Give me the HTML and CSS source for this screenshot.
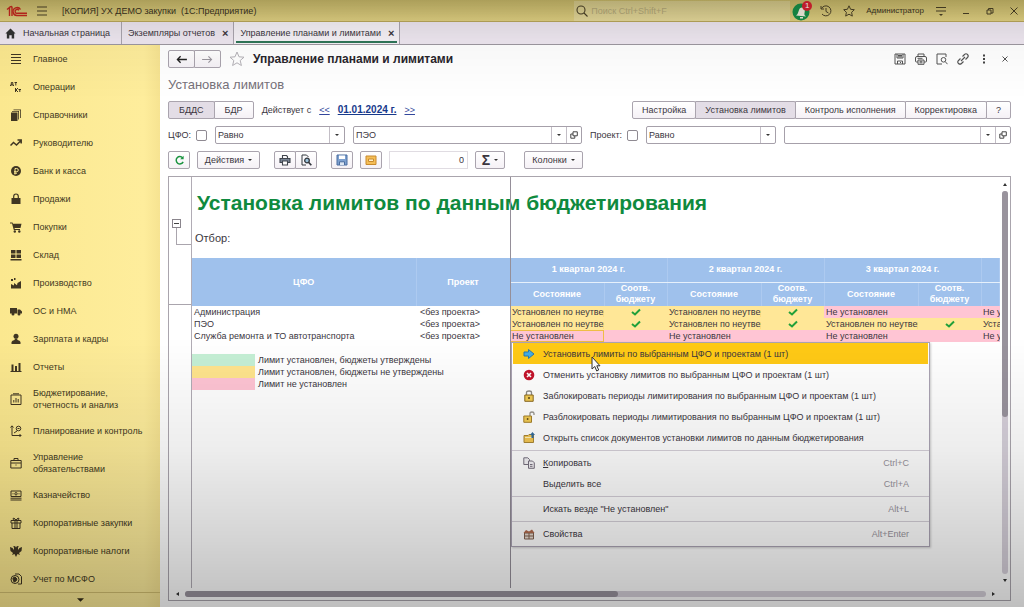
FILE: index.html
```html
<!DOCTYPE html>
<html lang="ru">
<head>
<meta charset="utf-8">
<meta name="viewport" content="width=device-width, initial-scale=1">
<title>[КОПИЯ] УХ ДЕМО закупки (1С:Предприятие)</title>
<link rel="stylesheet" href="styles.css">
</head>
<body>
<header class="titlebar">
  <svg class="logo" viewBox="0 0 22 12" width="22" height="12" fill="none" stroke="#c4281f" stroke-width="1.4"><path d="M1 4.500 3.500 2.500M3.500 2v9M6 1.500V11M3.500 2 6 1.300"/><path d="M14.500 4.500A4 4 0 1 0 11.500 10.500H21M12.800 5.300A2 2 0 1 0 11.500 8.300H21"/></svg>
  <button class="bare burger" aria-label="Меню"><svg viewBox="0 0 12 12" width="12" height="12" stroke="#4a4026" stroke-width="1.2"><path d="M1 2h10M1 6h10M1 10h10"/></svg></button>
  <span class="app-name">[КОПИЯ] УХ ДЕМО закупки&nbsp; (1С:Предприятие)</span>
  <label class="search">
    <svg viewBox="0 0 12 12" width="12" height="12" fill="none" stroke="#4a4026" stroke-width="1.1"><circle cx="5" cy="5" r="4"/><path d="m8 8 3.500 3.500"/></svg>
    <input type="text" placeholder="Поиск Ctrl+Shift+F" aria-label="Поиск">
  </label>
  <div class="title-tools">
    <button class="bare bell" aria-label="Уведомления"><svg viewBox="0 0 20 20" width="20" height="20"><circle cx="9" cy="11" r="8.500" fill="#189048"/><path d="M4 14.500c2-1 2-3 3-5.500s3-3 4.500-2 1.500 3 1 5 .5 2.500 1.500 3.500z" fill="#f5f1e0"/><path d="M8 16h3v1.500H8z" fill="#f5f1e0"/></svg><span class="badge">1</span></button>
    <button class="bare" aria-label="История"><svg viewBox="0 0 12 12" width="12" height="12" fill="none" stroke="#4a4026"><path d="M1.500 3.500A5 5 0 1 1 2 9M1 1v3h3M6 3v3.500l2.500 1.500"/></svg></button>
    <button class="bare" aria-label="Избранное"><svg viewBox="0 0 12 12" width="12" height="12" fill="none" stroke="#4a4026"><path d="m6 .8 1.600 3.500 3.700.4-2.700 2.600.7 3.800L6 9.200l-3.300 1.900.7-3.800L.7 4.700l3.700-.4z"/></svg></button>
    <span class="user">Администратор</span>
    <button class="bare" aria-label="Сервис"><svg viewBox="0 0 12 12" width="12" height="12" stroke="#4a4026" stroke-width="1.100"><path d="M1 2.500h10M1 6h10"/><path d="M4 9h4L6 11z" fill="#4a4026" stroke="none"/></svg></button>
    <div class="window-tools">
      <button class="bare" aria-label="Свернуть"><svg viewBox="0 0 8 8" width="8" height="8" stroke="#4a4026"><path d="M1 6.500h6"/></svg></button>
      <button class="bare" aria-label="Развернуть"><svg viewBox="0 0 8 8" width="8" height="8" fill="none" stroke="#4a4026"><path d="M1 3h4v4H1zM2.500 3V1.500H7V6H5"/></svg></button>
      <button class="bare" aria-label="Закрыть"><svg viewBox="0 0 8 8" width="8" height="8" stroke="#4a4026"><path d="m.5.5 7 7M7.500.5l-7 7"/></svg></button>
    </div>
  </div>
</header>

<nav class="tabs" aria-label="Открытые окна">
  <a class="tab home" href="#"><svg viewBox="0 0 12 12" width="11" height="11" fill="#333"><path d="M6 .5 11.500 6H10v5.500H7.300V8H4.700v3.500H2V6H.5z"/></svg>Начальная страница</a>
  <a class="tab" href="#">Экземпляры отчетов<span class="tab-x">×</span></a>
  <a class="tab current" href="#">Управление планами и лимитами<span class="tab-x">×</span></a>
</nav>

<div class="shell">
<aside class="sidebar">
  <nav class="sections" aria-label="Разделы">
    <a href="#"><svg viewBox="0 0 12 12" stroke="#403623" stroke-width="1.200"><path d="M1 1.500h10M1 4.500h10M1 7.500h10M1 10.500h10"/></svg>Главное</a>
    <a href="#"><svg viewBox="0 0 12 12" fill="none" stroke="#403623"><path d="M.5 5V4h3v1M1.300 4V1.500h1.500V4M4.500 1.500h2.500M5.800 1.500V4.500M5.500 7v4M8 7 6 9l2 2M8.500 8.500H11M9.800 8.500V11"/></svg>Операции</a>
    <a href="#"><svg viewBox="0 0 12 12" fill="#403623"><path d="M1 3.500h6.500V12H1zM2 2h7v8.500h-.8V2.800H2zM3.500.5h7.500V9h-.8V1.300H3.500z"/></svg>Справочники</a>
    <a href="#"><svg viewBox="0 0 12 12" fill="none" stroke="#403623" stroke-width="1.500"><path d="M.5 8.500 3.500 5.500l3 2.500L11 3.500M7.500 3H11.200V6.500"/></svg>Руководителю</a>
    <a href="#"><svg viewBox="0 0 12 12"><circle cx="6" cy="6" r="5" fill="#403623"/><path d="M5 9.500V3.500h1.700a1.500 1.500 0 0 1 0 3.200H4M4 8.200h3" fill="none" stroke="#fbe892"/></svg>Банк и касса</a>
    <a href="#"><svg viewBox="0 0 12 12"><path d="M1.500 5h9v6h-9z" fill="#403623"/><path d="M3.700 6V3.500a2.300 2.500 0 0 1 4.600 0V6" fill="none" stroke="#403623" stroke-width="1.200"/></svg>Продажи</a>
    <a href="#"><svg viewBox="0 0 12 12" fill="#403623"><path d="M0 1.500h2.500l.5 1.300h8.500L10.500 7H4.500l.3 1H10v1H3.800L2 2.500H0z"/><circle cx="4.800" cy="10.500" r="1.200"/><circle cx="9.300" cy="10.500" r="1.200"/></svg>Покупки</a>
    <a href="#"><svg viewBox="0 0 12 12" fill="#403623"><path d="M1 1h4.500v3.500H1zM6.500 1H11v3.500H6.500zM1 5.500h4.500V9H1zM6.500 5.500H11V9H6.500zM.5 10h11v1.500H.5z"/></svg>Склад</a>
    <a href="#"><svg viewBox="0 0 12 12" fill="#403623"><path d="M1 11.500V7l3 1.500V6l3 2.300L7.500 6l3.500-2v7.500zM1 2h2v2H1zM4 1h1.500v2H4z"/></svg>Производство</a>
    <a href="#"><svg viewBox="0 0 12 12" fill="#403623"><path d="M0 3h7v5.500H0zM7.500 4.500h2.500L12 6.500v2H7.500z"/><circle cx="3" cy="9" r="1.500"/><circle cx="9" cy="9" r="1.500"/></svg>ОС и НМА</a>
    <a href="#"><svg viewBox="0 0 12 12" fill="#403623"><circle cx="6" cy="3.300" r="2.500"/><path d="M1.500 11V9Q2 7.500 4.500 7L5 5.500h2L7.500 7Q10 7.500 10.500 9v2z"/></svg>Зарплата и кадры</a>
    <a href="#"><svg viewBox="0 0 12 12" fill="#403623"><path d="M1.500 3.500h2V10h-2zM5 5h2v5H5zM8.500 2h2v8h-2zM.5 10h11v1H.5z"/></svg>Отчеты</a>
    <a class="two" href="#"><svg viewBox="0 0 12 12" fill="none" stroke="#403623"><path d="M1 2h10v9.500H1zM3 .8h6M3.800 9.500V7M6 9.500V5M8.200 9.500V6" /></svg><span>Бюджетирование,<br>отчетность и анализ</span></a>
    <a href="#"><svg viewBox="0 0 12 12" fill="none" stroke="#403623"><path d="M2 1v9.500h9M.5 2.500 2 .8l1.500 1.700M9.500 9l1.500 1.500L9.500 12M4 8l3-2"/><circle cx="8.500" cy="3.500" r="2.300"/><path d="M7.500 3.500h2"/></svg>Планирование и контроль</a>
    <a class="two" href="#"><svg viewBox="0 0 12 12" fill="none" stroke="#403623"><path d="M.8 3.500h10.400v7.500H.8zM4 3.500V1.500h4v2M1 6h10M5.500 8h1"/></svg><span>Управление<br>обязательствами</span></a>
    <a href="#"><svg viewBox="0 0 12 12" fill="none" stroke="#403623"><path d="M1 2h10v5.500H1zM.5 9.200h11M.5 11h11"/><circle cx="6" cy="4.800" r="1.200"/><path d="M2.500 4.800h1M8.500 4.800h1"/></svg>Казначейство</a>
    <a href="#"><svg viewBox="0 0 12 12" fill="none" stroke="#403623"><path d="M1 3.500h10V6H1zM2 6v5.500h8V6M5 3.500v8M7 3.500v8M5.500 3.500Q2.500 3 3 1.500T6 3q2.500-3 3-1.500T6.500 3.500"/></svg>Корпоративные закупки</a>
    <a href="#"><svg viewBox="0 0 12 12" fill="#403623"><path d="M0 2l2.500 1L4 5V2.500L3 1.500 5 1l1 1.500L7 1l2 .5-1 1V5l1.500-2L12 2l-.5 4L9 8l1 2-2.500-1L6 12 4.500 9 2 10l1-2L.5 6z"/></svg>Корпоративные налоги</a>
    <a href="#"><svg viewBox="0 0 12 12" fill="none" stroke="#403623"><circle cx="5" cy="6.500" r="4"/><path d="M5 1h4l2.500 2.500V11H8" /><path d="M3 5l2-1 2 2-1 2-2 1zM1.500 6h1" fill="#403623"/></svg>Учет по МСФО</a>
  </nav>
  <button class="bare more" aria-label="Еще разделы"><svg viewBox="0 0 8 4" width="7" height="4" fill="#352c18"><path d="M0 0h8L4 4z"/></svg></button>
</aside>

<main class="form">
  <div class="row head">
    <div class="group">
      <button class="btn icon wide" aria-label="Назад"><svg viewBox="0 0 12 10" width="11" height="9" fill="none" stroke="#222" stroke-width="1.500"><path d="M12 5H2M5 1.500 1.500 5 5 8.500"/></svg></button>
      <button class="btn icon wide" aria-label="Вперед"><svg viewBox="0 0 12 10" width="11" height="9" fill="none" stroke="#9a959e" stroke-width="1.200"><path d="M0 5h10M7 1.500 10.500 5 7 8.500"/></svg></button>
    </div>
    <button class="bare" aria-label="В избранное"><svg viewBox="0 0 16 16" width="16" height="16" fill="none" stroke="#b5b2b8"><path d="m8 1 2 4.800 5 .4-3.800 3.300 1.200 5L8 11.800l-4.400 2.700 1.200-5L1 6.200l5-.4z"/></svg></button>
    <h1 class="form-title">Управление планами и лимитами</h1>
    <div class="head-tools">
      <button class="bare" aria-label="Сохранить"><svg viewBox="0 0 12 12" width="12" height="12" fill="none" stroke="#555"><path d="M1 1h10v10H1zM3 1v4h6V1M4 2.500h4M4 3.800h4M3.500 11V8h5v3M6.500 9v1"/></svg></button>
      <button class="bare" aria-label="Печать"><svg viewBox="0 0 12 12" width="12" height="12" fill="none" stroke="#555"><path d="M3 3.500V1h6v2.500M3 9H1.500Q.5 9 .5 8V5q0-1.500 1.500-1.500h8q1.500 0 1.500 1.500v3q0 1-1 1H9M3 7h6v4.300H3zM4.500 8.300h3M4.500 9.800h3M2.500 5.300h5"/></svg></button>
      <button class="bare" aria-label="Просмотр"><svg viewBox="0 0 12 12" width="12" height="12" fill="none" stroke="#555"><path d="M10 4V1H1v10h5"/><circle cx="7.500" cy="6.800" r="2.300"/><path d="m9.200 8.600 2.300 2.600"/></svg></button>
      <button class="bare" aria-label="Ссылка"><svg viewBox="0 0 12 12" width="12" height="12" fill="none" stroke="#555" stroke-width="1.100"><path d="m4 8 4-4M5.500 3.500 7.500 1.500a2.100 2.100 0 0 1 3 3L8.500 6.500M3.500 5.500 1.500 7.500a2.100 2.100 0 0 0 3 3L6.500 8.500"/></svg></button>
      <button class="bare" aria-label="Еще"><svg viewBox="0 0 12 12" width="12" height="12" fill="#444"><path d="M5 1.500h2v2H5zM5 5h2v2H5zM5 8.500h2v2H5z"/></svg></button>
      <button class="bare" aria-label="Закрыть форму"><svg viewBox="0 0 12 12" width="12" height="12" stroke="#555"><path d="m3.500 3.500 5 5M8.500 3.500l-5 5"/></svg></button>
    </div>
  </div>

  <h2 class="subtitle">Установка лимитов</h2>

  <div class="row">
    <div class="group kinds">
      <button class="btn on" aria-pressed="true">БДДС</button>
      <button class="btn">БДР</button>
    </div>
    <span>Действует с</span>
    <a class="link" href="#">&lt;&lt;</a>
    <a class="date" href="#">01.01.2024 г.</a>
    <a class="link" href="#">&gt;&gt;</a>
    <div class="group modes">
      <button class="btn">Настройка</button>
      <button class="btn on" aria-pressed="true">Установка лимитов</button>
      <button class="btn">Контроль исполнения</button>
      <button class="btn">Корректировка</button>
      <button class="btn">?</button>
    </div>
  </div>

  <div class="row">
    <div class="filter">
      <label class="check">ЦФО:<input type="checkbox"></label>
      <div class="field kind"><select aria-label="Вид сравнения ЦФО"><option>Равно</option></select><i class="drop"></i></div>
      <div class="field grow"><input type="text" value="ПЭО" aria-label="ЦФО"><button class="drop" aria-label="Выбрать ЦФО"></button><button class="open" aria-label="Открыть ЦФО"><svg viewBox="0 0 8 8" width="8" height="8" fill="none" stroke="#444"><path d="M3 .8h4.300v4H3zM3 3H.8v4.200h4V5"/></svg></button></div>
    </div>
    <div class="filter filter-wide">
      <label class="check">Проект:<input type="checkbox"></label>
      <div class="field kind"><select aria-label="Вид сравнения проекта"><option>Равно</option></select><i class="drop"></i></div>
      <div class="field grow"><input type="text" aria-label="Проект"><button class="drop" aria-label="Выбрать проект"></button><button class="open" aria-label="Открыть проект"><svg viewBox="0 0 8 8" width="8" height="8" fill="none" stroke="#444"><path d="M3 .8h4.300v4H3zM3 3H.8v4.200h4V5"/></svg></button></div>
    </div>
  </div>

  <div class="row commands">
    <button class="btn icon" aria-label="Обновить"><svg viewBox="0 0 12 12" width="11" height="11" fill="none" stroke="#1b9440" stroke-width="1.600"><path d="M9.500 3.200A4 4 0 1 0 10 7.500"/><path d="M10.500.8V4.500H6.800z" fill="#1b9440" stroke="none"/></svg></button>
    <button class="btn menu-btn">Действия<i class="tri"></i></button>
    <div class="group gap-before">
      <button class="btn icon" aria-label="Печать таблицы"><svg viewBox="0 0 12 12" width="12" height="12" fill="none" stroke="#41464e" stroke-width="1.100"><path d="M3.500 4V1.500h4l1 1V4"/><path d="M1 4.500h10v4H1z" fill="#788494"/><path d="M3.500 7h5v4h-5z" fill="#fff"/></svg></button>
      <button class="btn icon" aria-label="Предварительный просмотр"><svg viewBox="0 0 12 12" width="12" height="12" fill="none" stroke="#33383e"><path d="M6 11H2V1h4.500l2 2"/><circle cx="7" cy="6.500" r="2.300" fill="#9cc4dd" stroke-width="1.300"/><path d="m8.800 8.500 2.500 2.800" stroke-width="1.700"/></svg></button>
    </div>
    <button class="btn icon gap-before" aria-label="Сохранить таблицу"><svg viewBox="0 0 12 12" width="12" height="12" stroke="#4b6d9f"><path d="M1 1h10v10H1z" fill="#7da0cf"/><path d="M3 1.500h6V5H3z" fill="#fff" stroke="none"/><path d="M3.500 11V7.800h5V11" fill="#dce6f3"/></svg></button>
    <button class="btn icon" aria-label="Редактировать ячейку"><svg viewBox="0 0 12 12" width="12" height="12"><path d="M1 2h10v8.500H1z" fill="#f5be57" stroke="#c88a2e"/><path d="M3.500 5h5v2.500h-5z" fill="#fff0c8" stroke="#c88a2e"/></svg></button>
    <input class="sum" type="text" value="0" aria-label="Сумма выделенных ячеек">
    <button class="btn sigma" aria-label="Сумма"><b>Σ</b><i class="tri"></i></button>
    <button class="btn columns">Колонки<i class="tri"></i></button>
  </div>

  <section class="sheet" aria-label="Установка лимитов по данным бюджетирования">
    <div class="gutter">
      <button class="fold" aria-label="Свернуть группу"></button>
      <i class="bracket"></i>
      <i class="split-row"></i>
    </div>
    <div class="canvas">
      <h3 class="report-title">Установка лимитов по данным бюджетирования</h3>
      <p class="selection">Отбор:</p>
      <table class="limits">
        <colgroup><col class="c-cfo"><col class="c-project"><col class="c-state"><col class="c-match"><col class="c-state"><col class="c-match"><col class="c-state"><col class="c-match"><col></colgroup>
        <thead>
          <tr><th rowspan="2">ЦФО</th><th rowspan="2">Проект</th><th class="q" colspan="2">1 квартал 2024 г.</th><th class="q" colspan="2">2 квартал 2024 г.</th><th class="q" colspan="2">3 квартал 2024 г.</th><th class="q"></th></tr>
          <tr><th>Состояние</th><th>Соотв. бюджету</th><th>Состояние</th><th>Соотв. бюджету</th><th>Состояние</th><th>Соотв. бюджету</th><th></th></tr>
        </thead>
        <tbody>
          <tr><td>Администрация</td><td class="project">&lt;без проекта&gt;</td><td class="wait">Установлен по неутвержденным</td><td class="wait tick"><svg viewBox="0 0 10 8"><path d="m1 4 3 2.500L9 1.500"/></svg></td><td class="wait">Установлен по неутвержденным</td><td class="wait tick"><svg viewBox="0 0 10 8"><path d="m1 4 3 2.500L9 1.500"/></svg></td><td class="none">Не установлен</td><td class="none"></td><td class="none">Не установлен</td></tr>
          <tr><td>ПЭО</td><td class="project">&lt;без проекта&gt;</td><td class="wait">Установлен по неутвержденным</td><td class="wait tick"><svg viewBox="0 0 10 8"><path d="m1 4 3 2.500L9 1.500"/></svg></td><td class="wait">Установлен по неутвержденным</td><td class="wait tick"><svg viewBox="0 0 10 8"><path d="m1 4 3 2.500L9 1.500"/></svg></td><td class="wait">Установлен по неутвержденным</td><td class="wait tick"><svg viewBox="0 0 10 8"><path d="m1 4 3 2.500L9 1.500"/></svg></td><td class="wait">Установлен</td></tr>
          <tr><td>Служба ремонта и ТО автотранспорта</td><td class="project">&lt;без проекта&gt;</td><td class="none picked">Не установлен</td><td class="none"></td><td class="none">Не установлен</td><td class="none"></td><td class="none">Не установлен</td><td class="none"></td><td class="none">Не установлен</td></tr>
        </tbody>
      </table>
      <ul class="legend">
        <li class="ok">Лимит установлен, бюджеты утверждены</li>
        <li class="pending">Лимит установлен, бюджеты не утверждены</li>
        <li class="missing">Лимит не установлен</li>
      </ul>
      <i class="split-col"></i>
    </div>
    <div class="vscroll"><svg viewBox="0 0 4 3"><path d="M0 3h4L2 0z"/></svg><div class="track"><div class="thumb"></div></div><svg viewBox="0 0 4 3"><path d="M0 0h4L2 3z"/></svg></div>
    <div class="hscroll"><svg viewBox="0 0 3 4"><path d="M3 0v4L0 2z"/></svg><div class="track"><div class="thumb"></div></div><svg viewBox="0 0 3 4"><path d="M0 0v4l3-2z"/></svg></div>

    <div class="popup" role="menu">
      <div class="popup-group actions">
        <button class="hot" role="menuitem"><svg viewBox="0 0 12 12"><path d="M1 4h4.500V1.500L11 6l-5.500 4.500V8H1z" fill="#45aee6" stroke="#2b78a8"/></svg>Установить лимиты по выбранным ЦФО и проектам (1 шт)</button>
        <button role="menuitem"><svg viewBox="0 0 12 12"><circle cx="6" cy="6" r="5.300" fill="#c4152c"/><path d="m4 4 4 4M8 4 4 8" stroke="#fff" stroke-width="1.600"/></svg>Отменить установку лимитов по выбранным ЦФО и проектам (1 шт)</button>
        <button role="menuitem"><svg viewBox="0 0 12 12"><path d="M3.500 5.500V2.500q0-1.500 2.500-1.500t2.500 1.500v3" fill="none" stroke="#8d8b86" stroke-width="1.300"/><path d="M1.800 5h8.400v6.300H1.800z" fill="#f3cc55" stroke="#8b6b22"/><path d="M6 7v2" stroke="#584516" stroke-width="1.500"/></svg>Заблокировать периоды лимитирования по выбранным ЦФО и проектам (1 шт)</button>
        <button role="menuitem"><svg viewBox="0 0 12 12"><path d="M7 5.500V2.500Q7 1 9 1t2 1.500V4" fill="none" stroke="#99968f" stroke-width="1.300"/><path d="M.8 5h7.700v6.300H.8z" fill="#f3cc55" stroke="#a5812c"/><path d="M4.600 7v2" stroke="#70591e" stroke-width="1.500"/></svg>Разблокировать периоды лимитирования по выбранным ЦФО и проектам (1 шт)</button>
        <button role="menuitem"><svg viewBox="0 0 12 12"><path d="M1 3.500h4l1-1h4.500V10.500H1z" fill="#f3c653" stroke="#a98636"/><path d="M2 5.500h8" stroke="#fff2bd"/><path d="M9.500 0 12 3h-1.500v3h-2V3H7z" fill="#356d9d"/></svg>Открыть список документов установки лимитов по данным бюджетирования</button>
      </div>
      <div class="popup-group">
        <button role="menuitem"><svg viewBox="0 0 12 12" fill="#f4f2f6" stroke="#77717f"><path d="M.8.8h4l1.700 1.700v5H.8z"/><path d="M5.500 4h4l1.800 1.800v5.500H5.500zM7 7.500h2.500M7 9.300h2.500"/></svg><span><u>К</u>опировать</span><kbd>Ctrl+C</kbd></button>
        <button role="menuitem"><svg viewBox="0 0 12 12"></svg><span>Вы<u>д</u>елить все</span><kbd>Ctrl+A</kbd></button>
      </div>
      <div class="popup-group">
        <button role="menuitem"><svg viewBox="0 0 12 12"></svg>Искать везде "Не установлен"<kbd>Alt+L</kbd></button>
      </div>
      <div class="popup-group">
        <button role="menuitem"><svg viewBox="0 0 12 12"><path d="M1.500 5h9v6h-9z" fill="#e9ddd2" stroke="#80614f"/><path d="M.5 5 3 2l3 1.500L9 1.500 11.500 5z" fill="#b06a4d"/><path d="M6 5v6M2 8h8" stroke="#80614f"/></svg>Свойства<kbd>Alt+Enter</kbd></button>
      </div>
      <svg class="pointer" viewBox="0 0 10 16" width="10" height="16"><path d="M1 1v12l2.800-2.500L5.700 15l2-1-1.900-4.200H9z" fill="#fff" stroke="#333"/></svg>
    </div>
  </section>
</main>
</div>
<div class="shade"></div>
</body>
</html>
```
FILE: styles.css
```css
* { box-sizing: border-box; }

body {
  margin: 0;
  height: 100vh;
  display: flex;
  flex-direction: column;
  overflow: hidden;
  background: #fff;
  color: #3b363e;
  font: 9px/12px "Liberation Sans", Arial, sans-serif;
}

button, input, select { font: inherit; color: inherit; margin: 0; }
a { color: inherit; text-decoration: none; }
svg { display: block; flex: none; }
i { display: block; }
.bare { padding: 0; border: 0; background: none; display: block; }

/* Window title */
.titlebar {
  flex: none;
  height: 22px;
  display: flex;
  align-items: center;
  padding: 0 6px;
  background: linear-gradient(#c6b768, #e2d283);
  border-bottom: 1px solid #bba95c;
  color: #3a3220;
}
.burger { margin: 0 14px 0 8px; }
.app-name { flex: 1; white-space: nowrap; }
.search {
  display: flex;
  align-items: center;
  gap: 3px;
  width: 216px;
  height: 20px;
  padding-left: 2px;
  background: rgba(255, 255, 255, .2);
}
.search input { flex: 1; min-width: 0; border: 0; padding: 0; background: none; }
.search input::placeholder { color: #b3a778; opacity: 1; }
.title-tools { display: flex; align-items: center; gap: 11px; padding-left: 2px; }
.user { font-size: 8px; }
.bell { position: relative; margin-right: -3px; }
.badge {
  position: absolute;
  top: 0;
  right: 0;
  width: 10px;
  height: 10px;
  border-radius: 50%;
  background: #da2432;
  color: #fff;
  font-size: 8px;
  line-height: 10px;
}
.window-tools { display: flex; gap: 16px; padding-left: 4px; }

/* Open windows */
.tabs {
  flex: none;
  height: 23px;
  display: flex;
  background: #eee7f0;
  border-bottom: 1px solid #9d98a0;
}
.tab {
  position: relative;
  display: flex;
  align-items: center;
  gap: 7px;
  padding: 0 5px 0 6px;
  border-right: 1px solid #aaa5ae;
  white-space: nowrap;
}
.home { padding: 0 11px 0 5px; }
.tab-x { font-size: 11px; font-weight: bold; line-height: 10px; }
.current { background: #f6f2f7; }
.current::after {
  content: "";
  position: absolute;
  inset: auto 2px 1px;
  height: 2px;
  background: #2f7658;
}

.shell { flex: 1; min-height: 0; display: flex; }

/* Sections */
.sidebar {
  flex: none;
  width: 160px;
  display: flex;
  flex-direction: column;
  background: linear-gradient(90deg, #fbe88f, #feed9c 90%, #f6e391);
  color: #43391f;
}
.sections { flex: 1; min-height: 0; overflow: hidden; border-bottom: 1px solid #d3c070; }
.sections a { height: 28px; display: flex; gap: 11px; align-items: center; padding-left: 10px; white-space: nowrap; }
.sections .two { height: 36px; }
.sections svg { width: 12px; height: 12px; }
.more { flex: none; height: 14px; align-self: center; }

/* Form */
.form { flex: 1; min-width: 0; display: flex; flex-direction: column; gap: 7px; padding: 5px 13px 6px 8px; }
.row { display: flex; align-items: center; gap: 8px; height: 18px; flex: none; white-space: nowrap; }
.form-title { margin: 0; font-size: 12px; line-height: 18px; color: #29252c; }
.head-tools { display: flex; gap: 9px; margin-left: auto; }
.subtitle { margin: 0; font-size: 13px; font-weight: normal; line-height: 19px; color: #77727a; }

.btn {
  height: 18px;
  display: flex;
  align-items: center;
  justify-content: center;
  gap: 4px;
  padding: 0 9px;
  border: 1px solid #aaa4ae;
  border-radius: 2px;
  background: linear-gradient(#fff, #f5f1f6);
  white-space: nowrap;
}
.btn.icon { width: 22px; padding: 0; }
.btn.wide { width: 27px; }
.btn.on { background: #e3dde6; }
.group { display: flex; }
.group .btn + .btn { margin-left: -1px; border-radius: 0 2px 2px 0; }
.kinds .btn { padding: 0 10px; }
.modes { margin-left: auto; }
.link { color: #33479c; text-decoration: underline; }
.date { color: #183a8c; font-size: 10px; font-weight: bold; text-decoration: underline; }

.filter { flex: 58; min-width: 0; display: flex; align-items: center; gap: 8px; }
.filter-wide { flex: 59; }
.check { display: flex; align-items: center; gap: 5px; }
.check input { appearance: none; width: 11px; height: 11px; border: 1px solid #8f8a92; border-radius: 2px; background: #fff; }
.field { display: flex; height: 18px; border: 1px solid #a6a0aa; border-radius: 2px; background: #fff; }
.field select, .field input { flex: 1; min-width: 0; appearance: none; border: 0; padding: 0 2px; background: none; }
.kind { width: 130px; }
.grow { flex: 1; min-width: 0; }
.drop, .open { width: 15px; padding: 0; border: 0; border-left: 1px solid #c3bec6; background: none; display: flex; align-items: center; justify-content: center; }
.drop::before, .tri { content: ""; border: 2px solid transparent; border-top-color: #333; border-bottom: 0; }

.commands { gap: 7px; }
.gap-before { margin-left: 7px; }
.sum { width: 79px; height: 18px; padding: 0 3px; border: 1px solid #e0dce2; background: #fff; text-align: right; }
.menu-btn { width: 63px; }
.sigma { width: 30px; padding: 0; }
.sigma b { font-size: 14px; }
.columns { width: 59px; margin-left: 12px; padding: 0; }

/* Spreadsheet */
.sheet {
  position: relative;
  flex: 1;
  min-height: 0;
  display: grid;
  grid-template: minmax(0, 1fr) 12px / 23px minmax(0, 1fr) 10px;
  border: 1px solid #aaa5ad;
}
.gutter { border-right: 1px solid #b1acb5; padding-top: 42px; }
.fold { display: block; width: 9px; height: 9px; margin-left: 3px; padding: 0; border: 1px solid #8a858d; background: linear-gradient(#444, #444) center / 5px 1px no-repeat #fff; }
.bracket { width: 15px; height: 17px; margin-left: 7px; border: solid #aaa5ad; border-width: 0 0 1px 1px; }
.split-row { margin-top: 59px; border-top: 1px solid #aaa5ad; }
.canvas { position: relative; overflow: hidden; }
.split-col { position: absolute; inset: 0 auto 0 318px; border-left: 1px solid #958f99; }
.report-title { margin: 14px 5px 16px; font-size: 21px; line-height: 24px; color: #0f8a3e; white-space: nowrap; }
.selection { margin: 0 3px 13px; font-size: 11px; line-height: 14px; }

.limits { width: 100%; table-layout: fixed; border-collapse: collapse; white-space: nowrap; }
.c-cfo { width: 224px; }
.c-project { width: 94px; }
.c-state { width: 94px; }
.c-match { width: 63px; }
.limits th {
  height: 24px;
  padding: 0;
  background: #9fc1ec;
  border-right: 1px solid #adcaf0;
  color: #fff;
  line-height: 11px;
  white-space: normal;
}
.limits .q { border-bottom: 1px solid #e6f0fb; }
.limits td { height: 12px; padding: 0 2px; line-height: 12px; overflow: hidden; }
.limits .project { padding-left: 4px; }
.limits .wait { background: #ffe797; }
.limits .none { background: #ffc5d4; }
.limits .picked { outline: 1px solid #efbd45; outline-offset: -1px; }
.tick svg { width: 10px; height: 8px; margin: 0 auto; fill: none; stroke: #21a03a; stroke-width: 2; }

.legend { list-style: none; margin: 12px 0 0; padding: 0; }
.legend li { display: flex; gap: 3px; height: 12px; }
.legend li::before { content: ""; width: 63px; }
.ok::before { background: #c5efd5; }
.pending::before { background: #ffe58d; }
.missing::before { background: #ffc5d4; }

.vscroll, .hscroll { display: flex; align-items: center; fill: #333; }
.vscroll { flex-direction: column; padding: 6px 0; gap: 5px; }
.vscroll svg { width: 4px; height: 3px; }
.hscroll { grid-column: 1 / -1; padding: 0 15px 0 7px; gap: 6px; }
.hscroll svg { width: 3px; height: 4px; }
.track { flex: 1; border-radius: 3px; background: #d6d0da; }
.vscroll .track { width: 6px; }
.hscroll .track { height: 6px; }
.thumb { border-radius: 3px; background: #99939d; }
.vscroll .thumb { height: 59%; }
.hscroll .thumb { width: 54%; height: 100%; }

/* Context menu */
.popup {
  position: absolute;
  left: 342px;
  top: 165px;
  width: 419px;
  border: 1px solid #aaa3b3;
  background: #fff;
  box-shadow: 1px 1px 2px rgba(0, 0, 0, .2);
}
.popup-group { padding: 1px 1px 2px; }
.popup .actions { padding-top: 0; }
.popup-group + .popup-group { border-top: 1px solid #d5d0d9; }
.popup button {
  width: 100%;
  height: 21px;
  display: flex;
  align-items: center;
  gap: 8px;
  padding: 0 19px 0 10px;
  border: 0;
  background: none;
  text-align: left;
  white-space: nowrap;
}
.popup button svg { width: 12px; height: 12px; }
.popup .hot { background: #ffca16; }
.popup kbd { margin-left: auto; font: inherit; color: #98939c; }
.pointer { position: absolute; left: 79px; top: 13px; }

/* Darkening towards the screen edges */
.shade {
  position: fixed;
  inset: 0;
  pointer-events: none;
  background:
    linear-gradient(rgba(0, 0, 0, .13), rgba(0, 0, 0, .03) 40px, transparent 100px),
    linear-gradient(to top, rgba(0, 0, 0, .25), rgba(0, 0, 0, .17) 67px, rgba(0, 0, 0, .07) 157px, transparent 270px);
}
```
